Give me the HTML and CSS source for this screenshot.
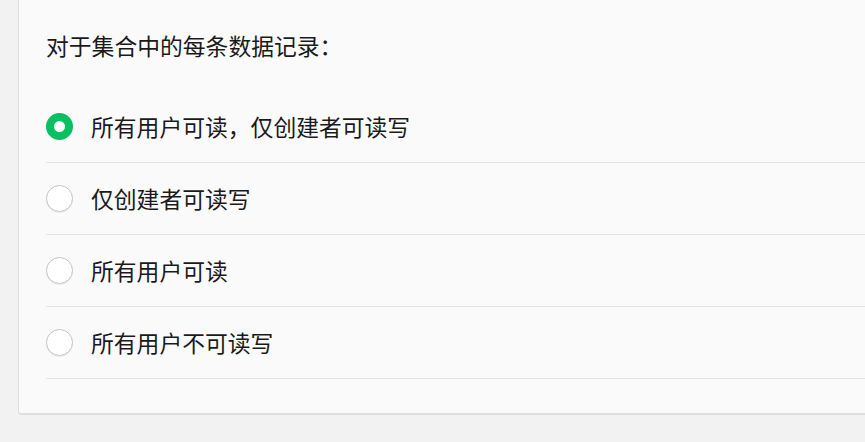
FILE: index.html
```html
<!DOCTYPE html>
<html lang="zh-CN">
<head>
    <meta charset="UTF-8">
    <meta name="viewport" content="width=device-width, initial-scale=1.0">
    <title>数据权限设置</title>
    <link rel="stylesheet" href="styles.css">
</head>
<body>
    <div class="panel">
        <div class="panel-title">对于集合中的每条数据记录：</div>

        <div class="options">
            <label class="option">
                <input type="radio" name="perm" checked>
                <span class="radio"></span>
                <span class="option-text">所有用户可读，仅创建者可读写</span>
            </label>
            <label class="option">
                <input type="radio" name="perm">
                <span class="radio"></span>
                <span class="option-text">仅创建者可读写</span>
            </label>
            <label class="option">
                <input type="radio" name="perm">
                <span class="radio"></span>
                <span class="option-text">所有用户可读</span>
            </label>
            <label class="option">
                <input type="radio" name="perm">
                <span class="radio"></span>
                <span class="option-text">所有用户不可读写</span>
            </label>
        </div>
    </div>
</body>
</html>
```

FILE: styles.css
```css
html, body {
    margin: 0;
    padding: 0;
}
body {
    font-family: "Noto Sans CJK SC", "Noto Sans", sans-serif;
    background: #f2f2f2;
    color: #1a1a1a;
    padding-left: 18px;
    overflow: hidden;
}
.panel {
    background: #fafafa;
    border: 1px solid #dedede;
    border-bottom-width: 2px;
    border-radius: 4px;
    margin-top: -6px;
    margin-right: -30px;
    padding: 36px 0 34px 27px;
}
.panel-title {
    font-size: 22.8px;
    line-height: 30px;
}
.options {
    margin-top: 30px;
}
.option {
    display: flex;
    align-items: center;
    height: 71px;
    border-bottom: 1px solid #e3e3e3;
    cursor: pointer;
}
.option input {
    display: none;
}
.radio {
    width: 27px;
    height: 27px;
    box-sizing: border-box;
    border-radius: 50%;
    border: 1px solid #c4c4c4;
    background: #fff;
    box-shadow: 0 1px 1px rgba(0,0,0,0.06);
    margin-right: 18px;
    flex-shrink: 0;
}
.option input:checked + .radio {
    border: 8px solid #07c160;
    box-shadow: none;
}
.option-text {
    font-size: 22.8px;
    line-height: 30px;
}
```
